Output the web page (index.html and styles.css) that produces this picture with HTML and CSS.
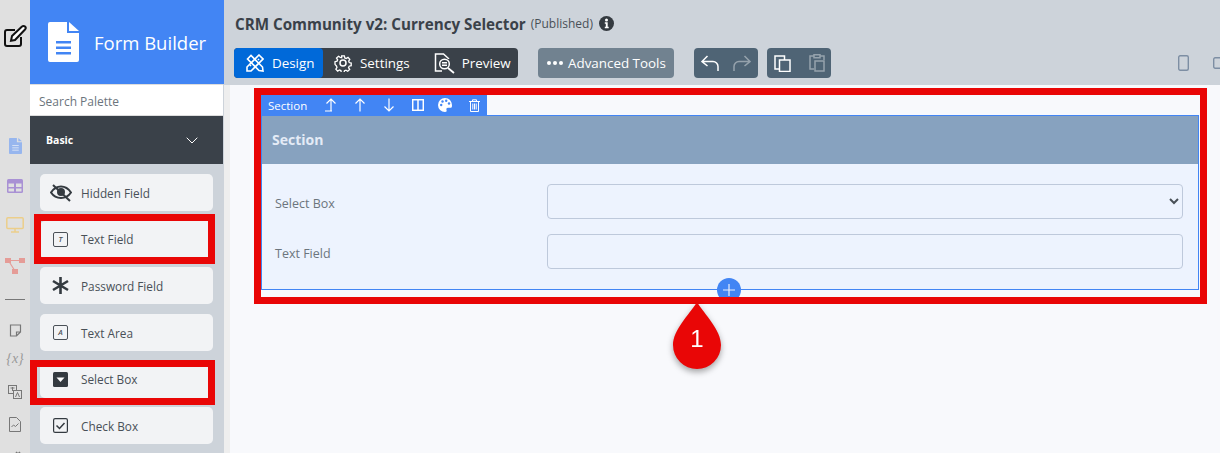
FILE: index.html
```html
<!DOCTYPE html>
<html lang="en">
<head>
    <meta charset="UTF-8">
    <meta name="viewport" content="width=device-width, initial-scale=1.0">
    <title>Form Builder</title>
    <link rel="stylesheet" href="styles.css">
</head>
<body>
    <div class="app">
        <nav class="rail">
            <svg class="rail-edit" width="24" height="24" viewBox="0 0 24 24" fill="none" stroke="#111" stroke-width="2"><path d="M18 13v7a2 2 0 0 1-2 2H4a2 2 0 0 1-2-2V8a2 2 0 0 1 2-2h8"/><path d="M9 12 19 2.500a1.800 1.800 0 0 1 3 3L12 16l-4 .8z" fill="#fff"/></svg>
            <svg class="rail-icon" width="13" height="16" viewBox="0 0 14 17"><path d="M0 1a1 1 0 0 1 1-1h7.500v4.500H14V16a1 1 0 0 1-1 1H1a1 1 0 0 1-1-1z" fill="#97b6ee"/><path d="M10 0l4 3.500h-4z" fill="#97b6ee"/><path d="M3.500 8h7M3.500 10.500h7M3.500 13h7" stroke="#dbe5f5"/></svg>
            <svg class="rail-icon" width="16" height="14" viewBox="0 0 16 14"><rect width="16" height="14" rx="1.500" fill="#a991d4"/><path d="M1.500 4.500h5.500v3.500H1.500zM9 4.500h5.500v3.500H9zM1.500 9.500h5.500v3H1.500zM9 9.500h5.500v3H9z" fill="#e0e0e0"/></svg>
            <svg class="rail-icon" width="18" height="16" viewBox="0 0 18 16" fill="none" stroke="#ecce8a" stroke-width="1.500"><rect x=".8" y=".8" width="16.400" height="10.700" rx="1"/><path d="M9 11.500v3M5 15h8"/></svg>
            <svg class="rail-icon" width="20" height="16" viewBox="0 0 20 16" fill="#e59c97"><rect width="6" height="5"/><rect x="14" width="6" height="5"/><rect x="7" y="11" width="6" height="5"/><path d="M6 2h8v1H6zM5 4l5 8-1 .5-5-8z"/></svg>
            <div class="rail-line"></div>
            <svg class="rail-icon rail-low" width="13" height="13" viewBox="0 0 13 13" fill="none" stroke="#777" stroke-width="1.200"><path d="M1.500 1h10v7l-4 4h-6zM11.500 8h-4v4"/></svg>
            <span class="rail-var">{x}</span>
            <svg class="rail-icon rail-low" width="14" height="14" viewBox="0 0 14 14" fill="none" stroke="#777"><rect x=".5" y=".5" width="8" height="8" fill="#e0e0e0"/><rect x="5.500" y="5.500" width="8" height="8" fill="#e0e0e0"/><path d="M7.500 12l2-4.500 2 4.500"/><path d="M2.500 3h4M4.500 2v4"/></svg>
            <svg class="rail-icon rail-low" width="12" height="15" viewBox="0 0 12 15" fill="none" stroke="#777"><path d="M.5.500h7l4 4v10H.5z"/><path d="M2.500 10l2-2 2 1.500 3-3"/></svg>
            <svg class="rail-icon" width="14" height="14" viewBox="0 0 14 14" fill="none" stroke="#777" stroke-width="1.500"><path d="M2 13L12 3M8 3l3 3"/></svg>
        </nav>

        <aside class="sidebar">
            <div class="brand">
                <svg width="31" height="40" viewBox="0 0 31 40"><path d="M0 2a2 2 0 0 1 2-2h17v11h12v27a2 2 0 0 1-2 2H2a2 2 0 0 1-2-2z" fill="#fff"/><path d="M21 0l10 9H21z" fill="#fff"/><path d="M8 19h15v2.500H8zM8 24.500h15V27H8zM8 30h15v2.500H8z" fill="#4285f4"/></svg>
                <span>Form Builder</span>
            </div>
            <div class="search">Search Palette</div>
            <div class="group-head">
                <span>Basic</span>
                <svg width="12" height="7" viewBox="0 0 12 7" fill="none" stroke="#fff"><path d="M.7.700 6 6l5.300-5.300"/></svg>
            </div>
            <ul class="palette">
                <li><span class="pal-icon"><svg width="22" height="18" viewBox="0 0 22 18" fill="none" stroke="#343a40" stroke-width="2"><path d="M1 8.500C4 4 7.500 2.500 11 2.500S18 4 21 8.500c-3 4.500-6.500 5.500-10 5.500S4 13 1 8.500z"/><circle cx="11" cy="8" r="3" fill="#343a40"/><path d="M3 1l17 16"/></svg></span>Hidden Field</li>
                <li><span class="pal-icon"><span class="boxed">T</span></span>Text Field</li>
                <li><span class="pal-icon"><svg width="17" height="17" viewBox="0 0 17 17" stroke="#343a40" stroke-width="2.600"><path d="M8.500 0v17M1 4l15 9M16 4L1 13"/></svg></span>Password Field</li>
                <li><span class="pal-icon"><span class="boxed">A</span></span>Text Area</li>
                <li><span class="pal-icon"><svg width="15" height="15" viewBox="0 0 15 15"><rect width="15" height="15" rx="1.500" fill="#343a40"/><path d="M3.500 5.500h8l-4 4.500z" fill="#fff"/></svg></span>Select Box</li>
                <li><span class="pal-icon"><svg width="15" height="15" viewBox="0 0 15 15" fill="none" stroke="#343a40"><rect x=".6" y=".6" width="13.800" height="13.800" rx="1.500" stroke-width="1.200"/><path d="M3.500 7.500l3 3 5-5.500" stroke-width="1.500"/></svg></span>Check Box</li>
            </ul>
        </aside>

        <main class="main">
            <header class="topbar">
                <div class="title-row">
                    <h1>CRM Community v2: Currency Selector</h1>
                    <span class="status">(Published)</span>
                    <svg width="15" height="15" viewBox="0 0 15 15"><circle cx="7.500" cy="7.500" r="7.500" fill="#343a40"/><circle cx="7.500" cy="4" r="1.500" fill="#fff"/><path d="M5.800 6.300h2.900v4.500h1v1.400H5.800v-1.400h1V7.700h-1z" fill="#fff"/></svg>
                </div>
                <div class="tools">
                    <div class="btn-group dark">
                        <span class="tool active"><svg width="18" height="18" viewBox="0 0 18 18" fill="none" stroke="#fff" stroke-width="1.600"><path d="M1.500 5 5 1.500 16.500 13l.5 4-4-.5z"/><path d="M13 1l4 4L5 17l-4 0v-4z"/><path d="M12 5l1 1M4 11l1 1"/></svg>Design</span>
                        <span class="tool"><svg width="18" height="18" viewBox="0 0 18 18" fill="none" stroke="#fff" stroke-width="1.500"><circle cx="9" cy="9" r="3"/><path d="M7.500 1h3l.5 2.300 1.600.7 2-1.300 2 2.200-1.200 2 .6 1.600 2.200.6v3l-2.300.5-.7 1.600 1.300 2-2.200 2-2-1.200-1.600.6-.6 2.200h-3l-.5-2.300-1.600-.7-2 1.300-2-2.200 1.200-2-.6-1.600L0 10.500v-3l2.300-.5.700-1.600-1.300-2 2.200-2 2 1.200L7.500 3z" transform="translate(1 1) scale(.89)"/></svg>Settings</span>
                        <span class="tool tool-preview"><svg width="21" height="21" viewBox="0 0 21 21" fill="none" stroke="#fff" stroke-width="1.500"><path d="M8 18H1.500V1h8l5 4.500V6"/><circle cx="10.500" cy="11" r="4.800"/><path d="M14 15l6 5" stroke-width="1.800"/><path d="M8 9.500h5M8 11h5M8 12.500h5" stroke-width="1"/></svg>Preview</span>
                    </div>
                    <span class="tool-adv"><i class="dots"><b></b><b></b><b></b></i>Advanced Tools</span>
                    <div class="btn-group slate undo">
                        <svg width="18" height="16" viewBox="0 0 18 16" fill="none" stroke="#fff" stroke-width="1.500"><path d="M6.500 1 1 6.500 6.500 11M1 6.500h11a5 5 0 0 1 5 5V16"/></svg>
                        <svg class="dim" width="18" height="16" viewBox="0 0 18 16" fill="none" stroke="#fff" stroke-width="1.500"><path d="M11.500 1 17 6.500 11.500 11M17 6.500H6a5 5 0 0 0-5 5V16"/></svg>
                    </div>
                    <div class="btn-group slate copy">
                        <svg width="17" height="17" viewBox="0 0 17 17" fill="none" stroke="#fff" stroke-width="1.500"><path d="M5 14H1V1h9.500v4"/><rect x="5.500" y="5" width="10.500" height="11.500"/></svg>
                        <svg class="dim" width="16" height="18" viewBox="0 0 16 18" fill="none" stroke="#fff" stroke-width="1.500"><path d="M5 2H1v13h4M11 2h4v4M5 .8h6v3H5z"/><rect x="6" y="7" width="9" height="10"/></svg>
                    </div>
                    <div class="devices">
                        <svg width="11" height="16" viewBox="0 0 11 16" fill="none"><rect x=".7" y=".7" width="9.600" height="14.600" rx="1.500" stroke="#7d8ea3" stroke-width="1.400"/></svg>
                        <svg width="16" height="12" viewBox="0 0 16 12" fill="none"><rect x=".7" y=".7" width="14.600" height="10.600" rx="1.500" stroke="#7d8ea3" stroke-width="1.400"/></svg>
                    </div>
                </div>
            </header>

            <section class="canvas">
                <div class="sec-tools">
                    <span class="sec-tools-name">Section</span>
                    <svg width="12" height="14" viewBox="0 0 12 14" fill="none" stroke="#fff" stroke-width="1.200"><path d="M1.500 5.500 6 1l4.500 4.500M6 1v11.500M0 13h7"/></svg>
                    <svg width="12" height="14" viewBox="0 0 12 14" fill="none" stroke="#fff" stroke-width="1.200"><path d="M1.500 5.500 6 1l4.500 4.500M6 1v12.500"/></svg>
                    <svg width="12" height="14" viewBox="0 0 12 14" fill="none" stroke="#fff" stroke-width="1.200"><path d="M1.500 8.500 6 13l4.500-4.500M6 13V.5"/></svg>
                    <svg width="12" height="12" viewBox="0 0 12 12" fill="none" stroke="#fff" stroke-width="1.500"><rect x=".7" y=".7" width="10.600" height="10.600"/><path d="M6 1v10"/></svg>
                    <svg class="sec-palette" width="14" height="14" viewBox="0 0 14 14"><path d="M7 0a7 7 0 1 0 0 14c1.500 0 2-1 1.500-2-.5-1.200 0-2.200 1.500-2.200h2.500c1 0 1.500-.8 1.500-2.300C14 3 11 0 7 0z" fill="#fff"/><g fill="#4285f4"><circle cx="3.200" cy="7" r="1.200"/><circle cx="4.500" cy="3.500" r="1.200"/><circle cx="8.200" cy="2.700" r="1.200"/><circle cx="11" cy="5.500" r="1.200"/></g></svg>
                    <svg width="11" height="13" viewBox="0 0 11 13" fill="none" stroke="#fff"><path d="M0 2.500h11M3.500 2.500V.8h4v1.700M1.500 2.500v10h8v-10M3.800 4.500v6M5.500 4.500v6M7.200 4.500v6"/></svg>
                </div>
                <div class="section-card">
                    <h2>Section</h2>
                    <div class="section-body">
                        <div class="field">
                            <label for="selectBox">Select Box</label>
                            <select id="selectBox"><option></option></select>
                        </div>
                        <div class="field">
                            <label for="textField">Text Field</label>
                            <input type="text" id="textField">
                        </div>
                    </div>
                    <span class="add-btn"><svg width="12" height="12" viewBox="0 0 12 12" stroke="#e8eefc" stroke-width="1.200"><path d="M6 0v12M0 6h12"/></svg></span>
                </div>
            </section>
        </main>
    </div>

    <!-- callouts on top of the screenshot -->
    <div class="mark mark-text"></div>
    <div class="mark mark-select"></div>
    <div class="mark mark-section"></div>
    <div class="pin">
        <svg width="50" height="68" viewBox="0 0 50 68"><path d="M25 0C33 13 49 28 49 43a24 24 0 0 1-48 0C1 28 17 13 25 0z" fill="#e90606"/></svg>
        <span>1</span>
    </div>
</body>
</html>
```

FILE: styles.css
```css
* { box-sizing: border-box; }
html, body { margin: 0; height: 453px; overflow: hidden; }
body { font-family: "Open Sans", Arial, sans-serif; color: #495057; position: relative; }
.app { display: flex; width: 1220px; height: 453px; overflow: hidden; }

.rail { width: 30px; flex: none; background: #e0e0e0; display: flex; flex-direction: column; align-items: center; padding-top: 24px; overflow: hidden; }
.rail svg { flex: none; }
.rail-edit { margin-bottom: 90px; margin-left: -1px; }
.rail-icon { display: block; margin-bottom: 24.500px; }
.rail-low { margin-bottom: 17.500px; }
.rail-line { width: 20px; border-top: 1px solid #777; margin: 1px 0 23.500px; flex: none; }
.rail-var { font: italic 14px/16px "Liberation Serif", serif; color: #999; margin: -3px 0 18px; flex: none; }

.sidebar { width: 194px; flex: none; background: #cdd3da; }
.brand { height: 84px; background: #4285f4; color: #fff; display: flex; align-items: center; padding-left: 18px; gap: 15px; font-size: 18.500px; }
.search { height: 32px; background: #fff; margin-right: 1px; border-top: 1px solid #ddd; border-bottom: 1px solid #ddd; padding-left: 9px; font-size: 12px; line-height: 33px; color: #6c757d; }
.group-head { height: 48px; background: #3a4149; color: #fff; display: flex; align-items: center; justify-content: space-between; padding: 0 25px 0 16px; font-size: 10.500px; font-weight: 700; margin-right: 1px; }
.palette { list-style: none; margin: 0; padding: 10px 11px 0 10px; }
.palette li { height: 37px; margin-bottom: 9.700px; background: #f2f3f5; border-radius: 5px; display: flex; align-items: center; font-size: 11.800px; color: #495057; }
.pal-icon { width: 41px; display: flex; justify-content: center; flex: none; }
.boxed { width: 15px; height: 15px; border: 1.300px solid #4a5057; border-radius: 2px; font: italic 600 7.500px/12px "Open Sans", sans-serif; color: #4a5057; text-align: center; }

.main { flex: 1; min-width: 0; display: flex; flex-direction: column; background: #eee; }
.topbar { height: 85px; background: #cdd3da; padding: 0 0 0 10px; flex: none; }
.title-row { display: flex; align-items: center; height: 48px; padding-bottom: 1px; }
.title-row h1 { margin: 0 5px 0 1px; font-size: 15.200px; font-weight: 700; color: #3a4149; white-space: nowrap; }
.status { font-size: 12px; color: #495057; margin-right: 6px; }
.tools { display: flex; align-items: center; height: 30px; color: #fff; font-size: 13.400px; }
.btn-group { display: flex; align-items: center; height: 30px; border-radius: 4px; flex: none; }
.dark { background: #3a4149; width: 284px; }
.tool { display: flex; align-items: center; gap: 8px; height: 30px; padding: 0 12px 0 11px; flex: none; }
.tool svg { flex: none; }
.tool.active { background: #0069d9; border-radius: 4px; width: 89px; padding: 0 0 0 12px; }
.tool-preview { gap: 7px; padding-left: 12px; }
.tool-adv { display: flex; align-items: center; gap: 5px; height: 30px; width: 136px; margin-left: 20px; padding-left: 9px; background: #718290; border-radius: 4px; white-space: nowrap; flex: none; }
.dots { display: flex; gap: 2px; }
.dots b { width: 4px; height: 4px; border-radius: 50%; background: #fff; }
.slate { background: #4f6475; width: 64px; justify-content: space-between; padding: 0 7px; }
.undo { margin-left: 20px; }
.copy { margin-left: 9px; padding: 0 6px 0 7px; }
.dim { opacity: .4; }
.devices { display: flex; align-items: center; gap: 24px; margin-left: 347px; flex: none; }

.canvas { flex: 1; margin-left: 6px; background: #f8f9fc; padding: 10px 21px 0 31px; position: relative; }
.sec-tools { width: 226px; height: 20px; background: #4285f4; color: #fff; display: flex; align-items: center; font-size: 11.500px; padding-left: 7px; gap: 17px; }
.sec-tools-name { width: 40px; }
.sec-palette { margin-left: -3px; }
.section-card { position: relative; border: 1px solid #4285f4; }
.section-card h2 { margin: 0; height: 48px; background: #87a2bf; color: #e4ebf6; font-size: 14px; font-weight: 700; line-height: 48px; padding-left: 10px; }
.section-body { background: #edf3fe; height: 125px; padding-top: 20px; }
.field { display: flex; align-items: center; height: 35px; margin-bottom: 15px; }
.field label { width: 285px; padding: 4px 0 0 13px; font-size: 12.500px; color: #6c757d; }
.field select, .field input { width: 636px; height: 35px; border: 1px solid #bec9db; border-radius: 4px; background: #edf3fe; color: #495057; padding: 0 8px; }
.add-btn { position: absolute; left: 455px; bottom: -13px; width: 24px; height: 24px; border-radius: 50%; background: #4285f4; display: flex; align-items: center; justify-content: center; }

.mark { position: absolute; border: 7px solid #e90606; }
.mark-text { left: 34px; top: 214px; width: 181px; height: 50px; }
.mark-select { left: 30px; top: 360px; width: 185px; height: 45px; }
.mark-section { left: 254px; top: 88px; width: 953px; height: 216px; }
.pin { position: absolute; left: 672px; top: 302px; width: 50px; height: 68px; filter: drop-shadow(0 3px 3px rgba(0,0,0,.35)); }
.pin svg { display: block; }
.pin span { position: absolute; left: 0; right: 0; top: 21px; text-align: center; color: #fff; font: 24px/32px "Liberation Sans", sans-serif; }
```
